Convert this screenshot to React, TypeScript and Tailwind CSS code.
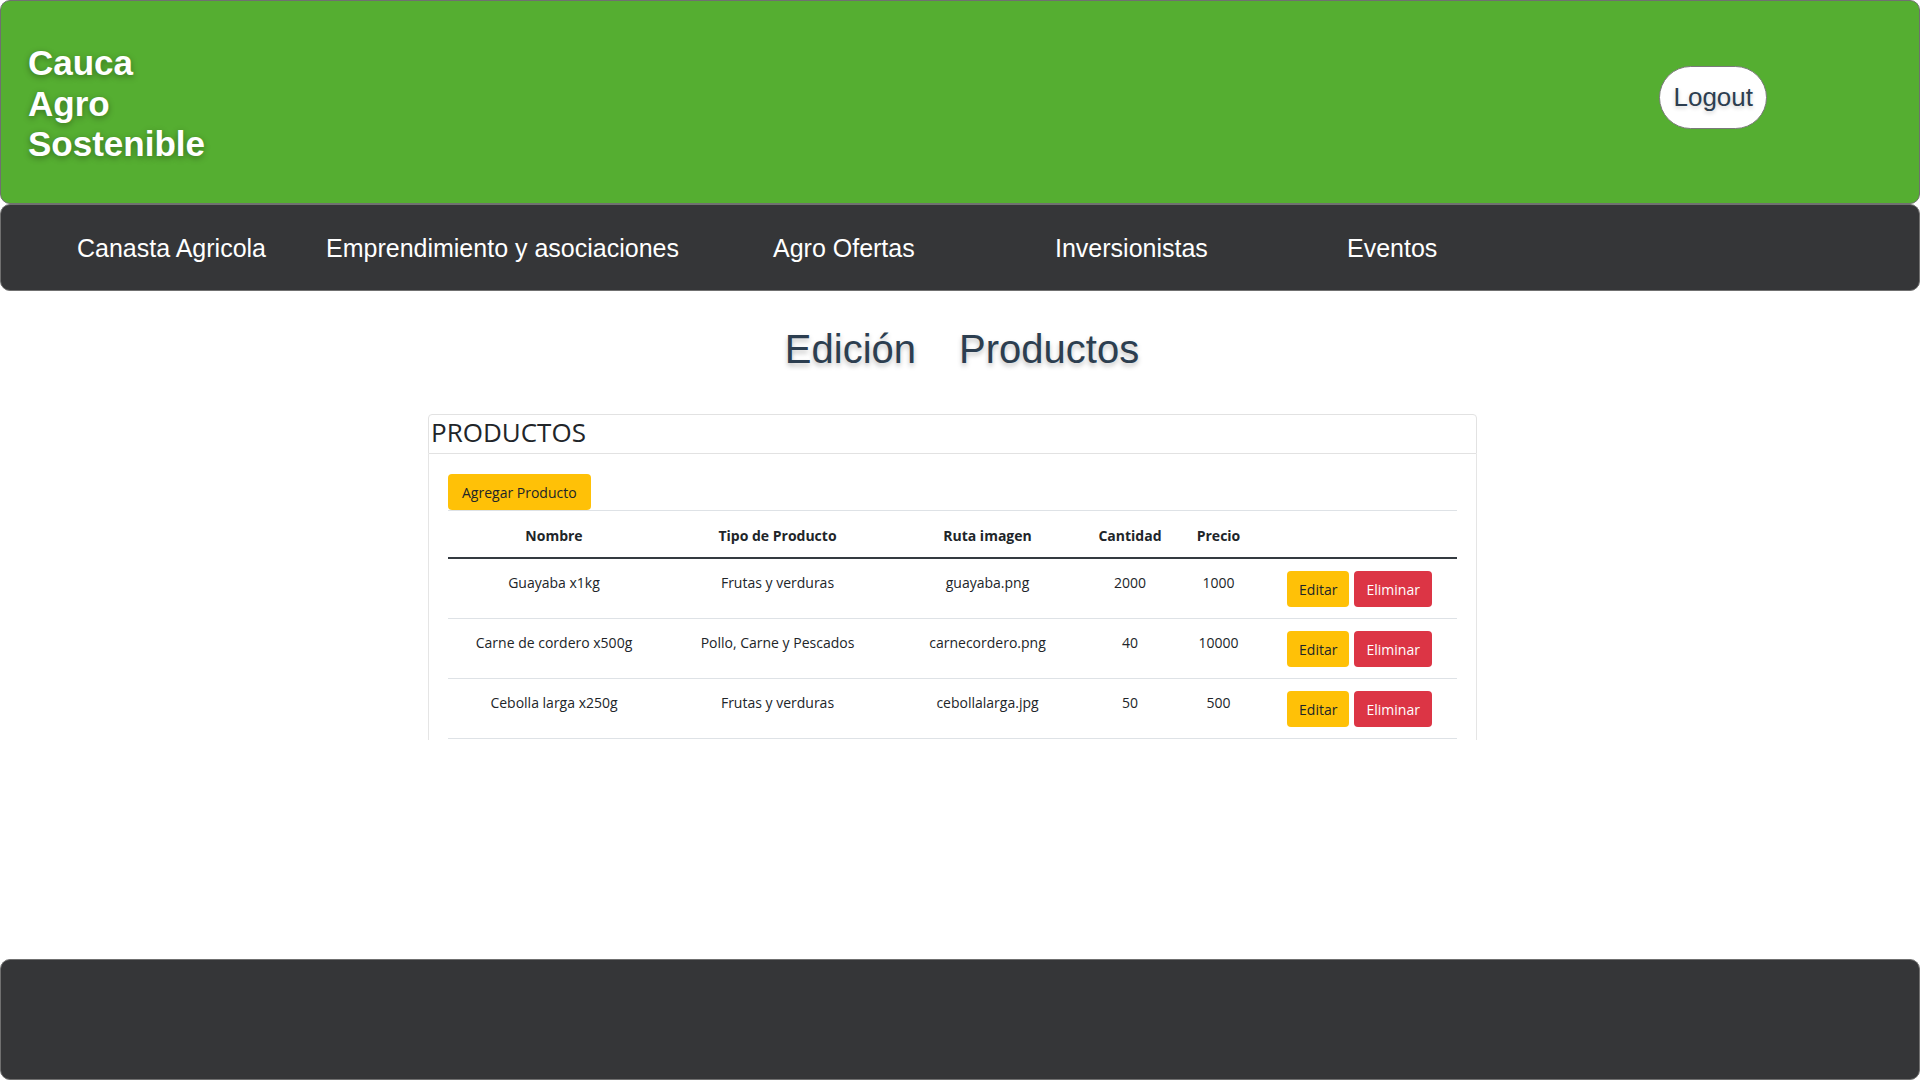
import React from 'react';

const links = [
  { label: 'Canasta Agricola', width: 'w-[249px]' },
  { label: 'Emprendimiento y asociaciones', width: 'w-[447px]' },
  { label: 'Agro Ofertas', width: 'w-[282px]' },
  { label: 'Inversionistas', width: 'w-[292px]' },
  { label: 'Eventos', width: 'w-[200px]' },
];

const productos = [
  { nombre: 'Guayaba x1kg', tipo: 'Frutas y verduras', ruta: 'guayaba.png', cantidad: 2000, precio: 1000 },
  { nombre: 'Carne de cordero x500g', tipo: 'Pollo, Carne y Pescados', ruta: 'carnecordero.png', cantidad: 40, precio: 10000 },
  { nombre: 'Cebolla larga x250g', tipo: 'Frutas y verduras', ruta: 'cebollalarga.jpg', cantidad: 50, precio: 500 },
];

export default function App() {
  return (
    <div className="flex min-h-screen flex-col bg-white font-['Liberation_Sans',Arial,sans-serif]">
      {/* Header */}
      <header className="flex h-[204px] items-center justify-between rounded-[10px] border border-[#707070] bg-[#55ae31] pl-[27px] pr-[152px]">
        <h1 className="pt-[4px] text-[35px] font-bold leading-[40.5px] text-white [text-shadow:0_2px_6px_rgba(0,0,0,0.35)]">
          Cauca
          <br />
          Agro
          <br />
          Sostenible
        </h1>
        <button className="mb-[9px] h-[63px] rounded-full border border-[#7a7a7a] bg-white px-[13px] text-[26px] text-[#2c3e50] [text-shadow:0_2px_4px_rgba(0,0,0,0.2)]">
          Logout
        </button>
      </header>

      {/* Nav */}
      <nav className="flex h-[87px] items-center rounded-[10px] border border-[#707070] bg-[#353638] pl-[76px] pt-[2px] text-[25px] text-white">
        {links.map((l) => (
          <a key={l.label} className={l.width}>
            {l.label}
          </a>
        ))}
      </nav>

      <main className="flex-1">
        <h2 className="mt-[34px] flex justify-center gap-[43px] pl-[4px] text-[40px] leading-[48px] text-[#2c3e50] [text-shadow:0_3px_5px_rgba(0,0,0,0.25)]">
          <span>Edición</span>
          <span>Productos</span>
        </h2>

        <div className="ml-[428px] mt-[41px] w-[1049px] font-['Open_Sans',sans-serif] text-[#212529]">
          <div className="flex h-[40px] items-center rounded-t-[4px] border border-[#e2e2e2] bg-white px-[2px] pb-[4px]">
            <h3 className="text-[26px] leading-[36px]">PRODUCTOS</h3>
          </div>
          <div className="border-x border-[#e5e5e5] px-[19px] pb-[1px] pt-[20px]">
            <button className="h-[36px] rounded-[4px] bg-[#ffc107] px-[14px] text-[14px] text-[#212529]">
              Agregar Producto
            </button>
            <table className="w-full table-fixed border-collapse text-[14px]">
              <thead>
                <tr>
                  <th className="w-[212px] border-t border-b-2 border-t-[#dee2e6] border-b-[#343a40] pb-[11px] pt-[14px] leading-[21px] font-bold">Nombre</th>
                  <th className="w-[235px] border-t border-b-2 border-t-[#dee2e6] border-b-[#343a40] pb-[11px] pt-[14px] leading-[21px] font-bold">Tipo de Producto</th>
                  <th className="w-[185px] border-t border-b-2 border-t-[#dee2e6] border-b-[#343a40] pb-[11px] pt-[14px] leading-[21px] font-bold">Ruta imagen</th>
                  <th className="w-[100px] border-t border-b-2 border-t-[#dee2e6] border-b-[#343a40] pb-[11px] pt-[14px] leading-[21px] font-bold">Cantidad</th>
                  <th className="w-[77px] border-t border-b-2 border-t-[#dee2e6] border-b-[#343a40] pb-[11px] pt-[14px] leading-[21px] font-bold">Precio</th>
                  <th className="w-[200px] border-t border-b-2 border-t-[#dee2e6] border-b-[#343a40] pb-[11px] pt-[14px] leading-[21px]"></th>
                </tr>
              </thead>
              <tbody>
                {productos.map((p) => (
                  <tr key={p.nombre} className="border-b border-[#dee2e6]">
                    <td className="pb-[11px] pt-[12px] text-center align-top leading-[24px]">{p.nombre}</td>
                    <td className="pb-[11px] pt-[12px] text-center align-top leading-[24px]">{p.tipo}</td>
                    <td className="pb-[11px] pt-[12px] text-center align-top leading-[24px]">{p.ruta}</td>
                    <td className="pb-[11px] pt-[12px] text-center align-top leading-[24px]">{p.cantidad}</td>
                    <td className="pb-[11px] pt-[12px] text-center align-top leading-[24px]">{p.precio}</td>
                    <td className="pb-[11px] pt-[12px] align-top">
                      <div className="flex justify-center gap-[5px] pl-[5px]">
                        <button className="h-[36px] rounded-[4px] bg-[#ffc107] px-[12px] text-[14px] text-[#212529]">Editar</button>
                        <button className="h-[36px] rounded-[4px] bg-[#dc3545] px-[12px] text-[14px] text-white">Eliminar</button>
                      </div>
                    </td>
                  </tr>
                ))}
              </tbody>
            </table>
          </div>
        </div>
      </main>

      {/* Footer */}
      <footer className="h-[121px] rounded-[10px] border border-[#707070] bg-[#353638]"></footer>
    </div>
  );
}
